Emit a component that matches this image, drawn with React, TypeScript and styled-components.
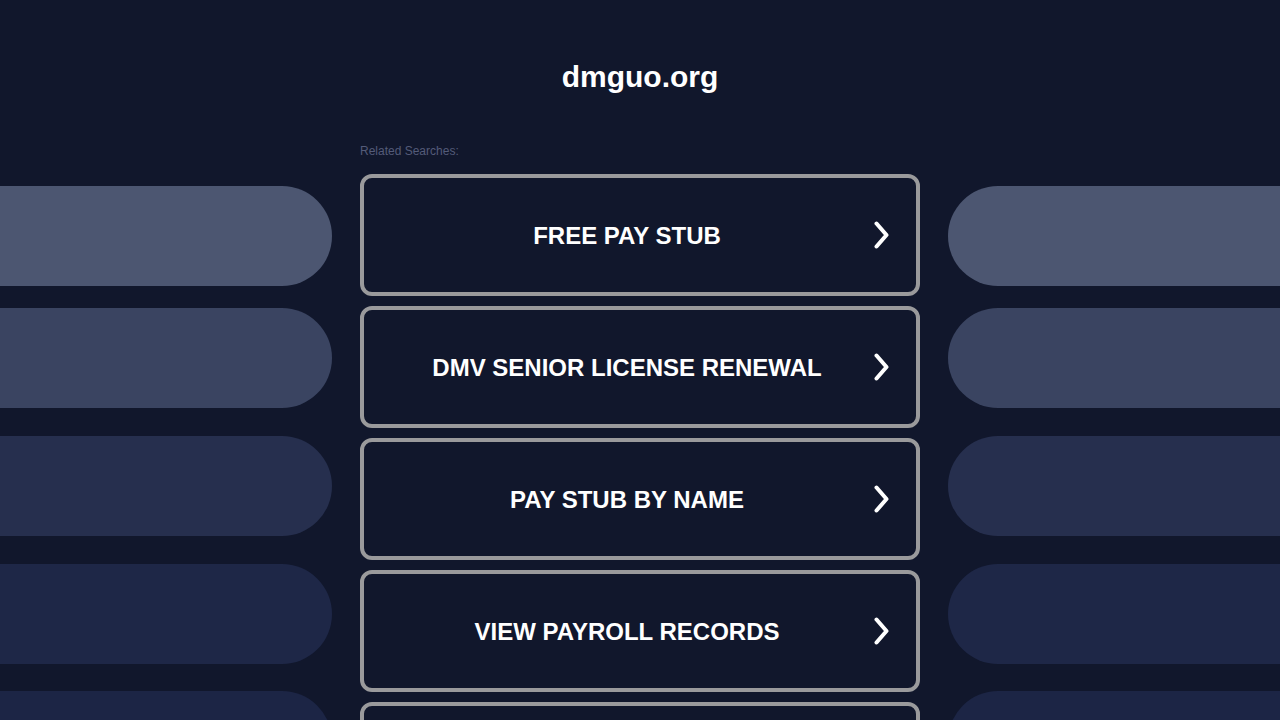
import { createGlobalStyle, styled } from "styled-components";

const GlobalStyle = createGlobalStyle`
	html, body {
		margin: 0;
		padding: 0;
		background: #11172c;
		font-family: "Liberation Sans", Arial, sans-serif;
		overflow: hidden;
	}
`;

const Page = styled.div`
	width: 1280px;
	height: 720px;
	overflow: hidden;
	background: #11172c;
`;

const Title = styled.h1`
	margin: 0;
	padding-top: 60px;
	height: 34px;
	line-height: 34px;
	font-size: 30px;
	font-weight: 700;
	color: #ffffff;
	text-align: center;
`;

const Columns = styled.div`
	display: grid;
	grid-template-columns: 332px 560px 332px;
	column-gap: 28px;
	margin-top: 36px;
`;

const Side = styled.div`
	display: flex;
	flex-direction: column;
	padding-top: 56px;
`;

const Pill = styled.div<{ $tone: string; $gap: number; $side: "left" | "right" }>`
	height: 100px;
	flex-shrink: 0;
	margin-top: ${({ $gap }) => $gap}px;
	background: ${({ $tone }) => $tone};
	border-radius: ${({ $side }) => ($side === "left" ? "0 50px 50px 0" : "50px 0 0 50px")};
`;

const Center = styled.div`
	display: flex;
	flex-direction: column;
	padding-top: 14px;
`;

const Label = styled.div`
	font-size: 12px;
	line-height: 14px;
	color: #545b79;
	margin-bottom: 16px;
`;

const List = styled.div`
	display: flex;
	flex-direction: column;
	gap: 10px;
`;

const SearchLink = styled.a`
	display: flex;
	align-items: center;
	height: 122px;
	box-sizing: border-box;
	border: 4px solid #9a9a9c;
	border-radius: 12px;
	background: #11172c;
	text-decoration: none;
	flex-shrink: 0;
`;

const LinkText = styled.span`
	flex: 1;
	padding: 2px 0 0 18px;
	text-align: center;
	font-size: 24px;
	font-weight: 700;
	color: #ffffff;
	line-height: 28px;
`;

const Chevron = styled.svg`
	width: 20px;
	height: 28px;
	margin-right: 24px;
	flex-shrink: 0;
`;

const pills = [
	{ tone: "#4c5671", gap: 0 },
	{ tone: "#3a4461", gap: 22 },
	{ tone: "#262f4e", gap: 28 },
	{ tone: "#1e2747", gap: 28 },
	{ tone: "#1c2545", gap: 27 },
];

const searches = ["FREE PAY STUB", "DMV SENIOR LICENSE RENEWAL", "PAY STUB BY NAME", "VIEW PAYROLL RECORDS", "PAYROLL SERVICES"];

function SidePills({ side }: { side: "left" | "right" }) {
	return (
		<Side>
			{pills.map((p, i) => (
				<Pill key={i} $tone={p.tone} $gap={p.gap} $side={side} />
			))}
		</Side>
	);
}

export default function App() {
	return (
		<Page>
			<GlobalStyle />
			<Title>dmguo.org</Title>
			<Columns>
				<SidePills side="left" />
				<Center>
					<Label>Related Searches:</Label>
					<List>
						{searches.map((s) => (
							<SearchLink key={s} href="#">
								<LinkText>{s}</LinkText>
								<Chevron viewBox="0 0 20 28">
									<path d="M4.5 2.5 L14.5 14 L4.5 25.5" fill="none" stroke="#ffffff" strokeWidth="4" strokeLinecap="round" strokeLinejoin="round" />
								</Chevron>
							</SearchLink>
						))}
					</List>
				</Center>
				<SidePills side="right" />
			</Columns>
		</Page>
	);
}
